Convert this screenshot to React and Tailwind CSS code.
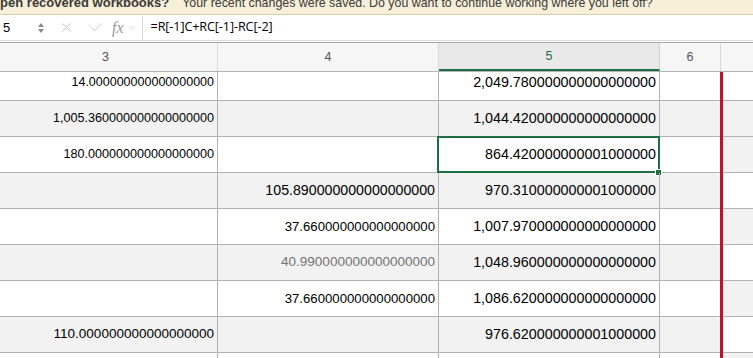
import { X, Check, ChevronDown } from "lucide-react";

// each cell: [text, font size]
const rows = [
  { top: true, c3: ["14.000000000000000000", "text-[12.5px]"], c4: ["", ""], c5: ["2,049.780000000000000000", "text-[14.3px]"] },
  { c3: ["1,005.360000000000000000", "text-[12.6px]"], c4: ["", ""], c5: ["1,044.420000000000000000", "text-[14.3px]"] },
  { c3: ["180.000000000000000000", "text-[12.6px]"], c4: ["", ""], c5: ["864.420000000001000000", "text-[14.3px]"], sel: true },
  { c3: ["", ""], c4: ["105.890000000000000000", "text-[14.2px]"], c5: ["970.310000000001000000", "text-[14.3px]"] },
  { c3: ["", ""], c4: ["37.660000000000000000", "text-[13.2px]"], c5: ["1,007.970000000000000000", "text-[14.3px]"] },
  { c3: ["", ""], c4: ["40.990000000000000000", "text-[13.5px]"], c5: ["1,048.960000000000000000", "text-[14.3px]"], dim: true },
  { c3: ["", ""], c4: ["37.660000000000000000", "text-[13.2px]"], c5: ["1,086.620000000000000000", "text-[14.3px]"] },
  { c3: ["110.000000000000000000", "text-[13.5px]"], c4: ["", ""], c5: ["976.620000000001000000", "text-[14.3px]"] },
  { c3: ["", ""], c4: ["", ""], c5: ["", ""] },
];

// shading of the strip right of the page-break line
const sideGray = [false, true, true, false, true, false, true, false, true];

const Cell = ({ w, cell, dim, top, children }) => (
  <div
    className={`relative h-full shrink-0 border-r border-b border-[#b3b3b3] flex items-center justify-end pr-[3px] ${top ? "pb-[7px]" : ""} ${w}`}
  >
    <span className={`whitespace-nowrap ${cell[1]} ${dim ? "text-[#737373]" : "text-black"}`}>{cell[0]}</span>
    {children}
  </div>
);

export default function App() {
  return (
    <div className="w-[753px] h-[358px] overflow-hidden bg-white font-['Liberation_Sans',Arial,sans-serif]">
      {/* recovery banner */}
      <div className="h-[15px] bg-[#f8efd8] border-b border-[#d6ccb0] overflow-hidden flex items-center">
        <p className="ml-[-10px] mt-[-11px] whitespace-nowrap text-[#3a3a3a]">
          <span className="font-bold text-[13px]">Open recovered workbooks?</span>
          <span className="ml-[13px] text-[12.4px]">Your recent changes were saved. Do you want to continue working where you left off?</span>
        </p>
      </div>

      {/* formula bar */}
      <div className="h-[26px] flex items-center bg-white border-b border-[#dcdcdc]">
        <div className="w-[50px] h-full flex items-center justify-between pl-[3px] pr-[6px]">
          <span className="text-[13px] text-black">5</span>
          <div className="flex flex-col items-center gap-[2px]">
            <span className="block w-0 h-0 border-l-[3px] border-r-[3px] border-b-[4px] border-l-transparent border-r-transparent border-b-[#8a8a8a]" />
            <span className="block w-0 h-0 border-l-[3px] border-r-[3px] border-t-[4px] border-l-transparent border-r-transparent border-t-[#8a8a8a]" />
          </div>
        </div>
        <div className="flex items-center h-full pl-[9px]">
          <X className="w-[15px] h-[15px] text-[#c4c4c4]" strokeWidth={1.6} />
          <Check className="w-[15px] h-[15px] text-[#c4c4c4] ml-[15px]" strokeWidth={1.6} />
          <span className="ml-[8px] text-[16px] italic text-[#9a9a9a] font-['Liberation_Serif',serif]">fx</span>
          <ChevronDown className="w-[9px] h-[9px] text-[#b5b5b5] ml-[4px]" strokeWidth={1.5} />
        </div>
        <div className="ml-[5px] h-[22px] flex-1 flex items-center border-l border-[#d4d4d4] pl-[8px]">
          <span className="text-[12.6px] text-black font-['Open_Sans',sans-serif] tracking-[-0.1px]">=R[-1]C+RC[-1]-RC[-2]</span>
        </div>
      </div>
      <div className="h-[2px] bg-white border-b border-[#a6a6a6]" />

      {/* column headers */}
      <div className="h-[29px] flex bg-[#f6f6f6] border-b border-[#b3b3b3] text-[12.5px] text-[#555]">
        <div className="w-[218px] shrink-0 border-r border-[#d9d9d9] flex items-center justify-center">
          <span className="ml-[-6px]">3</span>
        </div>
        <div className="w-[221px] shrink-0 border-r border-[#d9d9d9] flex items-center justify-center">4</div>
        <div className="w-[221px] shrink-0 border-r border-[#d0d0d0] bg-[#e9e9e9] flex items-center justify-center text-[#1e6e42] border-b-2 border-b-[#1e6e42]">
          5
        </div>
        <div className="w-[61px] shrink-0 border-r border-[#d9d9d9] flex items-center justify-center">6</div>
        <div className="flex-1" />
      </div>

      {/* grid body */}
      {rows.map((r, i) => (
        <div
          key={i}
          className={`flex ${i % 2 === 1 ? "bg-[#f2f2f2]" : "bg-white"} ${r.top ? "h-[29px]" : "h-[36px]"}`}
        >
          <Cell w="w-[218px]" cell={r.c3} top={r.top} />
          <Cell w="w-[221px]" cell={r.c4} dim={r.dim} top={r.top} />
          <Cell w="w-[221px]" cell={r.c5} top={r.top}>
            {r.sel && (
              <>
                <div className="absolute left-[-2px] top-[-1px] right-[-1px] bottom-[-1px] border-2 border-[#1e6e42]" />
                <div className="absolute right-[-3px] bottom-[-4px] w-[5px] h-[5px] bg-[#1e6e42] border border-white box-content" />
              </>
            )}
          </Cell>
          <div className="w-[60px] shrink-0 h-full border-b border-[#b3b3b3]" />
          <div className="w-[3px] shrink-0 h-full bg-[#c1112b]" />
          <div className={`flex-1 h-full border-b border-[#b3b3b3] ${sideGray[i] ? "bg-[#f2f2f2]" : "bg-white"}`} />
        </div>
      ))}
    </div>
  );
}
